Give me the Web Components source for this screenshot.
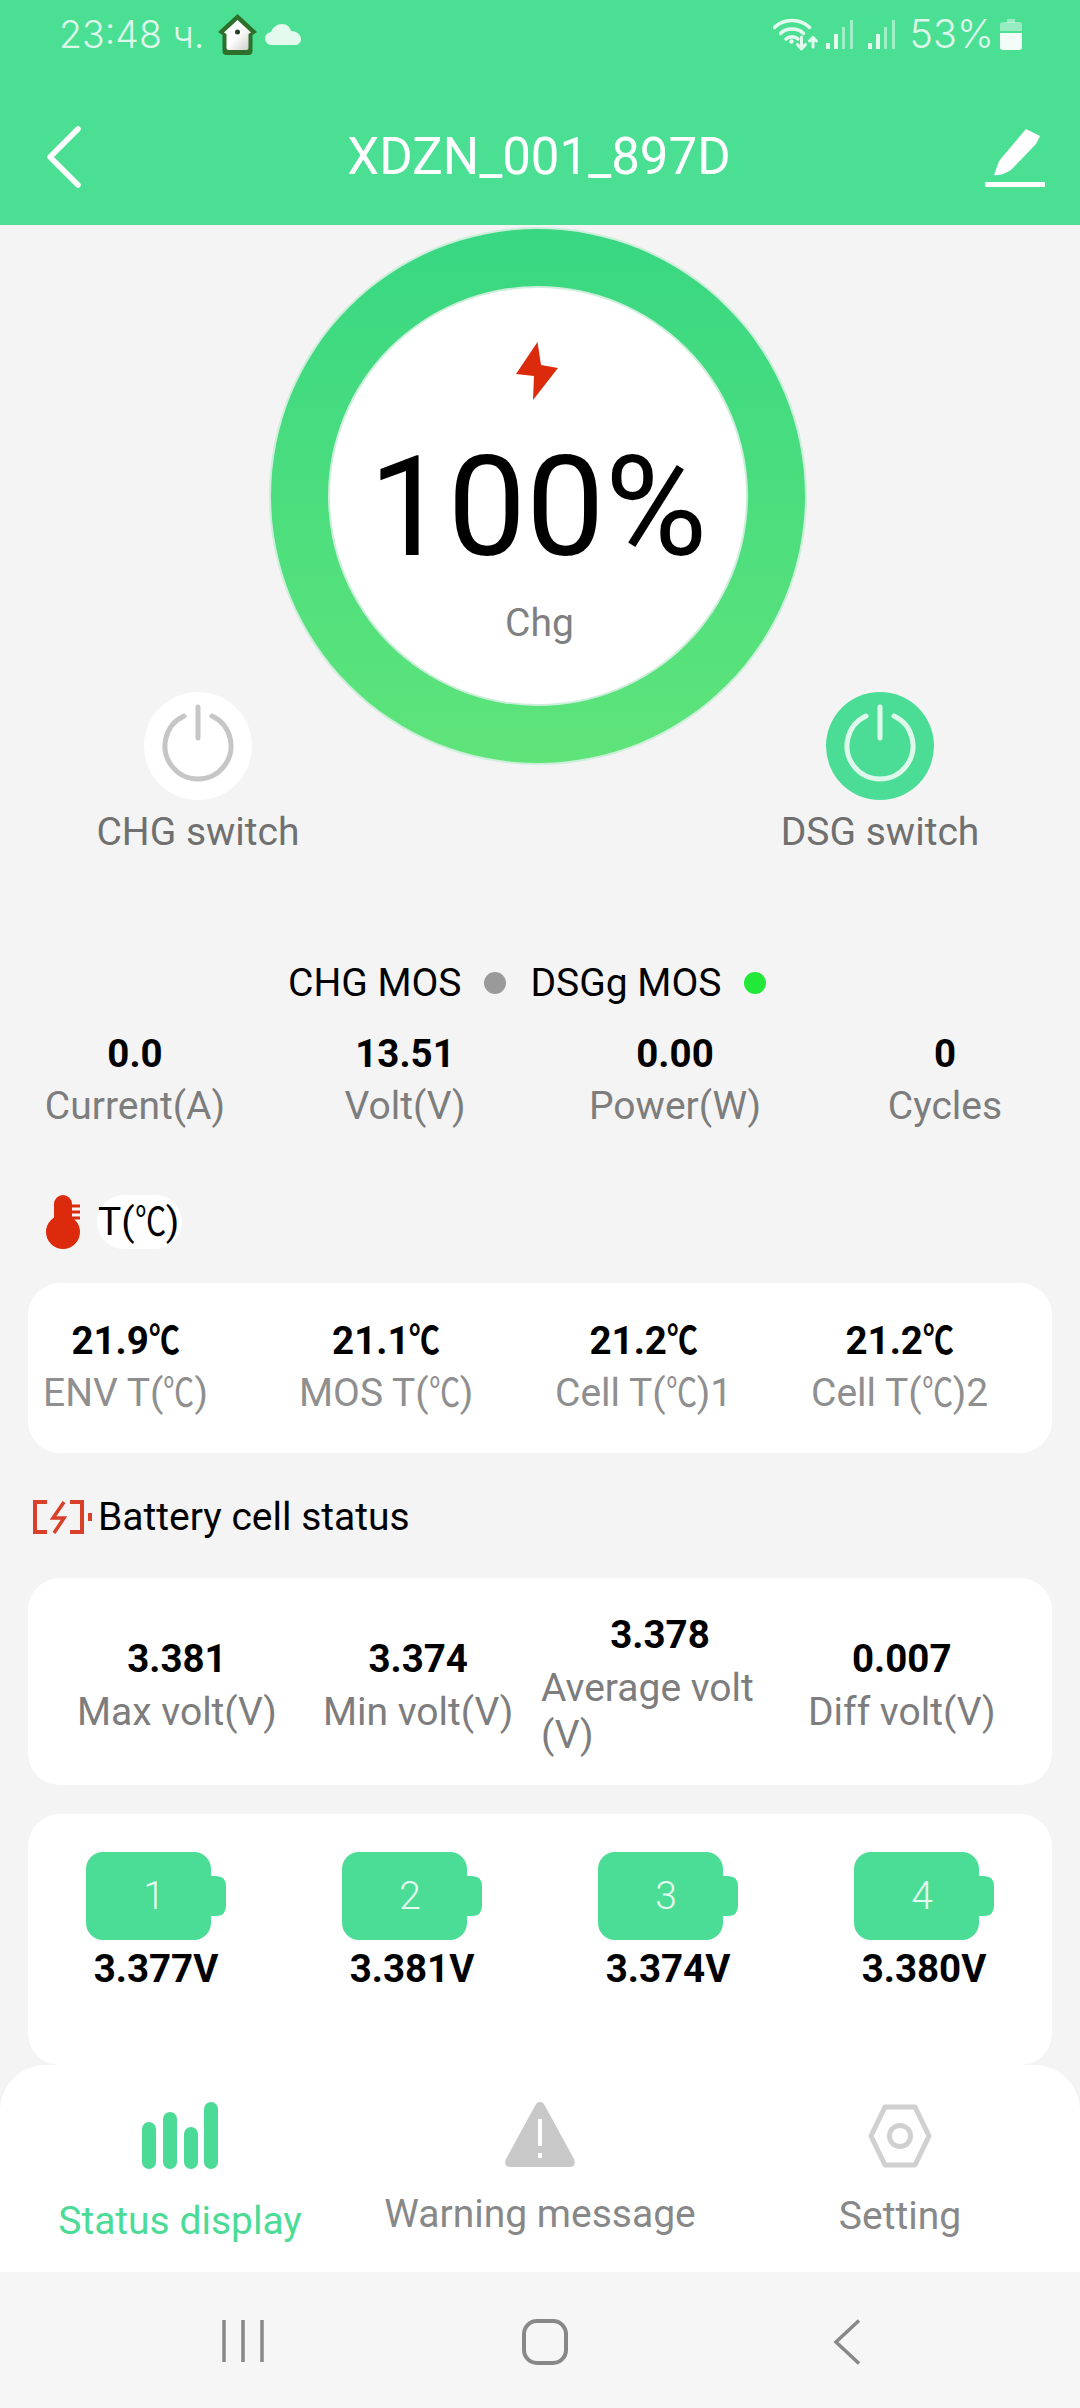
<!DOCTYPE html>
<html>
<head>
<meta charset="utf-8">
<style>
  html, body { margin: 0; padding: 0; }
  body {
    width: 1080px;
    height: 2408px;
    overflow: hidden;
    background: #f4f4f4;
    font-family: Roboto, "Noto Sans CJK SC", sans-serif;
    font-size: 39px;
    color: #000;
  }
  .cel { display: inline-block; transform: scaleX(.8); transform-origin: 0 50%; margin-right: -.2em; }
  charge-gauge { margin: 4px 0 0 271px; }
  .switches {
    display: flex;
    justify-content: space-between;
    margin-top: -71px;
    padding: 0 80px 0 78px;
  }
  .mos {
    display: flex;
    align-items: center;
    height: 46px;
    margin-top: 105px;
    padding-left: 288px;
  }
  .stats { display: grid; grid-template-columns: repeat(4, 270px); margin-top: 21px; justify-items: center; }
  .t-title { margin-top: 62px; padding-left: 46px; }
  .b-title { margin-top: 37px; padding-left: 33px; }
  .t-card { margin-top: 34px; height: 170px; }
  .v-card { margin-top: 34px; height: 207px; --v-lh: 61px; --l-lh: 47px; }
  .c-card { margin-top: 29px; height: 251px; }
</style>
</head>
<body>
<template id="status-bar-tpl">
  <style>
    :host { display: flex; align-items: center; height: 68px; padding: 0 58px 0 59px; color: #dcf8ea; font-family: Inter, Roboto, sans-serif; font-size: 37.5px; font-weight: 300; }
    .left, .right { display: flex; align-items: center; }
    .right { margin-left: auto; }
    svg { display: block; flex: none; }
  </style>
  <div class="left">
    <span>23:48 ч.</span>
    <svg style="margin:0 8px 0 14px" width="39" height="41" viewBox="0 0 39 41">
      <defs><linearGradient id="hm" x1="0" y1="0" x2="1" y2="1"><stop offset="0.5" stop-color="#fff"/><stop offset="1" stop-color="#c9c9c2"/></linearGradient></defs>
      <path d="M19.5 0 39 18 34.5 21V37q0 4-4 4H8.5q-4 0-4-4V21L0 18Z" fill="#2f6f2c"/>
      <path d="M19.5 6 33 18.5 30.5 20V34q0 2-2 2H10.500q-2 0-2-2V20L6 18.500Z" fill="url(#hm)"/>
      <circle cx="19.500" cy="18" r="2.500" fill="#2a3d28"/>
    </svg>
    <svg width="36" height="21" viewBox="0 0 36 21"><path d="M7 21a6.500 6.500 0 0 1-1-13C8 3 12 0 17 0c5 0 8 3 9 7 6 0 10 4 10 8 0 4-3 6-6 6Z" fill="#e4faef"/></svg>
  </div>
  <div class="right">
    <svg width="47" height="36" viewBox="0 0 47 36" fill="none" stroke="#e4faef" stroke-width="3.500" stroke-linecap="round" stroke-linejoin="round">
      <path d="M1.500 11.500C10 2 28 2 36.500 11.500"/>
      <path d="M7.500 17.500C13 11.500 25 11.500 30.500 17.500"/>
      <path d="M13 23c3-3 9-3 12 0" />
      <circle cx="18.500" cy="25.500" r="1.500" fill="#e4faef" stroke-width="1.500"/>
      <path d="M28.500 21V32M24.500 28.500 28.500 33 32.500 28.500" stroke-width="3"/>
      <path d="M40 31V22M36.500 25 40 21.500 43.500 25" stroke-width="3"/>
    </svg>
    <svg style="margin-left:6px" width="28" height="29" viewBox="0 0 28 29">
      <rect x="0" y="23" width="4" height="6" fill="#e4faef"/><rect x="8" y="14" width="4" height="15" fill="#e4faef"/>
      <rect x="16" y="7" width="3" height="22" fill="#e4faef" opacity=".55"/><rect x="24" y="0" width="3" height="29" fill="#e4faef" opacity=".55"/>
    </svg>
    <svg style="margin-left:14px" width="28" height="29" viewBox="0 0 28 29">
      <rect x="0" y="23" width="4" height="6" fill="#e4faef"/><rect x="8" y="14" width="4" height="15" fill="#e4faef"/>
      <rect x="16" y="7" width="3" height="22" fill="#e4faef" opacity=".55"/><rect x="24" y="0" width="3" height="29" fill="#e4faef" opacity=".55"/>
    </svg>
    <span style="margin-left:14px;font-size:39.500px">53%</span>
    <svg style="margin-left:6px" width="22" height="31" viewBox="0 0 22 31">
      <rect x="7" y="0" width="8" height="4" fill="#e4faef" opacity=".5"/>
      <path d="M3 3H19q3 0 3 3V12H0V6q0-3 3-3Z" fill="#e4faef" opacity=".5"/>
      <path d="M0 14H22V28q0 3-3 3H3q-3 0-3-3Z" fill="#f2fdf7"/>
    </svg>
  </div>
</template>

<template id="app-header-tpl">
  <style>
    :host { display: grid; grid-template-columns: 1fr auto 1fr; align-items: center; height: 137px; padding: 20px 49px 0 47px; color: #fff; font-size: 51px; }
    svg { display: block; }
    .edit { justify-self: end; margin-right: -14px; }
  </style>
  <svg width="34" height="62" viewBox="0 0 34 62" fill="none" stroke="#fff" stroke-width="5.500" stroke-linecap="round" stroke-linejoin="round"><path d="M31 3 3 31 31 59"/></svg>
  <span><slot></slot></span>
  <svg class="edit" width="60" height="62" viewBox="0 0 60 62">
    <path d="M9 49 14 35 41 3 55 10 51 18 27 43C22 47 14 50 9 49Z" fill="#fff"/>
    <rect x="0" y="56" width="60" height="5" rx="1" fill="#fff"/>
  </svg>
</template>

<template id="charge-gauge-tpl">
  <style>
    :host { display: block; width: 534px; height: 534px; }
    .ring {
      width: 100%; height: 100%; box-sizing: border-box; padding: 59px 0 0 59px;
      border-radius: 50%;
      background: linear-gradient(#38d782, #5fe47a);
      box-shadow: 0 0 0 2px #cdeedb;
    }
    .face {
      width: 416px; height: 416px; border-radius: 50%; background: #fff;
      box-shadow: 0 0 0 2px #cdeedb;
      display: flex; flex-direction: column; align-items: center;
    }
    svg { display: block; margin: 54px 2px 0 0; flex: none; }
    .pct { margin-top: 32px; font-size: 140px; line-height: 150px; }
    .sub { margin: 18px 0 0 3px; line-height: 46px; color: #808080; }
  </style>
  <div class="ring">
    <div class="face">
      <svg width="42" height="58" viewBox="0 0 42 58"><path d="M21.500 0 0 32 18 34 17 58 42 26 25 23Z" fill="#db2a0c"/></svg>
      <span class="pct">100%</span>
      <span class="sub"><slot></slot></span>
    </div>
  </div>
</template>

<template id="power-switch-tpl">
  <style>
    :host { display: flex; flex-direction: column; align-items: center; width: 240px; color: #707070; }
    .dot { width: 108px; height: 108px; border-radius: 50%; background: #fff; }
    :host([on]) .dot { background: #4bdd96; }
    svg { display: block; stroke: #c6c6c6; }
    :host([on]) svg { stroke: #def8eb; }
    .label { margin-top: 9px; line-height: 46px; }
  </style>
  <div class="dot">
    <svg width="108" height="108" viewBox="0 0 108 108" fill="none" stroke-width="5" stroke-linecap="round">
      <path d="M40 24.100A33 33 0 1 0 68 24.100"/>
      <path d="M54 15V46"/>
    </svg>
  </div>
  <span class="label"><slot></slot></span>
</template>

<template id="mos-light-tpl">
  <style>
    :host { display: inline-flex; align-items: center; line-height: 46px; }
    i { width: 22px; height: 22px; border-radius: 50%; margin: 0 24px 0 23px; background: var(--led, #9a9a9a); }
  </style>
  <span><slot></slot></span><i></i>
</template>

<template id="stat-item-tpl">
  <style>
    :host { display: inline-flex; flex-direction: column; align-items: center; }
    .cel { display: inline-block; transform: scaleX(.8); transform-origin: 0 50%; margin-right: -.2em; }
    .label { color: #7d7d7d; text-align: left; align-self: stretch; line-height: var(--l-lh, 53px); }
    .v { align-self: center; font-weight: 700; font-size: 38.5px; line-height: var(--v-lh, 53px); }
    :host(.light) .label { color: #8f8f8f; }
  </style>
  <span class="v"></span>
  <span class="label"><slot></slot></span>
</template>

<template id="section-title-tpl">
  <style>
    :host { display: flex; align-items: center; height: 54px; }
    .text { display: block; line-height: 54px; padding: 0 3px 0 1px; }
    :host([pill]) .text { background: #fff; border-radius: 27px; }
  </style>
  <slot name="icon"></slot>
  <span class="text"><slot></slot></span>
</template>

<template id="info-card-tpl">
  <style>
    :host { display: block; margin-left: 28px; margin-right: 28px; background: #fff; border-radius: 32px; box-sizing: border-box; }
  </style>
  <slot></slot>
</template>

<template id="cell-battery-tpl">
  <style>
    :host { display: flex; flex-direction: column; align-items: center; width: 256px; padding-top: 38px; }
    .pack { display: grid; width: 140px; height: 88px; }
    .pack > * { grid-area: 1 / 1; }
    svg { display: block; }
    .num { place-self: center; color: #e6fbf1; font-weight: 300; margin-left: -4px; }
    b { margin-top: 2px; line-height: 53px; font-weight: 700; font-size: 38.5px; }
  </style>
  <div class="pack">
    <svg width="140" height="88" viewBox="0 0 140 88">
      <rect x="0" y="0" width="125" height="88" rx="17" fill="#4bdd96"/>
      <path d="M120 24H130q10 0 10 10V54q0 10-10 10H120Z" fill="#4bdd96"/>
    </svg>
    <span class="num"></span>
  </div>
  <b><slot></slot></b>
</template>

<template id="tab-bar-tpl">
  <style>
    :host { display: grid; grid-template-columns: repeat(3, 360px); height: 207px; background: #fff; border-radius: 46px 46px 0 0; }
  </style>
  <slot></slot>
</template>

<template id="tab-item-tpl">
  <style>
    :host { display: flex; flex-direction: column; align-items: center; padding-top: 37px; color: #888; }
    :host([active]) { color: #4bdb96; }
    .icon { height: 68px; }
    .label { line-height: 46px; margin-top: var(--label-gap, 22px); }
    ::slotted(svg) { display: block; }
  </style>
  <div class="icon"><slot name="icon"></slot></div>
  <span class="label"><slot></slot></span>
</template>

<template id="nav-bar-tpl">
  <style>
    :host { display: grid; grid-template-columns: 400px 340px 1fr; height: 136px; background: #f6f6f6; }
    svg { display: block; }
    .a { margin: 47px 0 0 222px; }
    .b { margin: 47px 0 0 122px; }
    .c { margin: 47px 0 0 93px; }
  </style>
  <svg class="a" width="42" height="44" viewBox="0 0 42 44" stroke="#888" stroke-width="3.500"><path d="M2 1V43M21 1V43M40 1V43"/></svg>
  <svg class="b" width="46" height="46" viewBox="0 0 46 46" fill="none" stroke="#888" stroke-width="4"><rect x="2" y="2" width="42" height="42" rx="13"/></svg>
  <svg class="c" width="28" height="46" viewBox="0 0 28 46" fill="none" stroke="#888" stroke-width="3.500"><path d="M26 1.500 3 23 26 44.500"/></svg>
</template>

<app-header-wrap style="display:block;background:#4bdf94;height:225px">
  <status-bar></status-bar>
  <app-header>XDZN_001_897D</app-header>
</app-header-wrap>

<charge-gauge>Chg</charge-gauge>

<div class="switches">
  <power-switch>CHG switch</power-switch>
  <power-switch on>DSG switch</power-switch>
</div>

<div class="mos">
  <mos-light>CHG MOS</mos-light>
  <mos-light style="--led:#22e83a">DSGg MOS</mos-light>
</div>

<div class="stats">
  <stat-item value="0.0">Current(A)</stat-item>
  <stat-item value="13.51">Volt(V)</stat-item>
  <stat-item value="0.00">Power(W)</stat-item>
  <stat-item value="0">Cycles</stat-item>
</div>

<section-title class="t-title" pill>
  <svg slot="icon" style="display:block;margin-right:16px" width="35" height="54" viewBox="0 0 35 54">
    <circle cx="17" cy="37" r="17" fill="#dc2a0c"/>
    <rect x="8" y="0" width="18" height="40" rx="9" fill="#dc2a0c"/>
    <path d="M26 11H34M26 17H34M26 23H34" stroke="#dc2a0c" stroke-width="3"/>
  </svg>
  T(<span class="cel">℃</span>)
</section-title>

<info-card class="t-card">
  <div style="display:grid;grid-template-columns:repeat(4,256px);justify-items:start;padding:31px 0 0 15px">
    <stat-item class="light" value="21.9℃">ENV T(<span class="cel">℃</span>)</stat-item>
    <stat-item class="light" value="21.1℃">MOS T(<span class="cel">℃</span>)</stat-item>
    <stat-item class="light" value="21.2℃">Cell T(<span class="cel">℃</span>)1</stat-item>
    <stat-item class="light" value="21.2℃">Cell T(<span class="cel">℃</span>)2</stat-item>
  </div>
</info-card>

<section-title class="b-title">
  <svg slot="icon" style="display:block;margin-right:4px" width="60" height="36" viewBox="0 0 60 36" fill="none" stroke="#d8402a" stroke-width="4">
    <path d="M14 3H2V33H14"/>
    <path d="M37 3H49V33H37"/>
    <path d="M31 3 20 19H31L21 34" stroke-width="3.500"/>
    <rect x="55" y="14" width="4" height="8" fill="#d8402a" stroke="none"/>
  </svg>
  Battery cell status
</section-title>

<info-card class="v-card">
  <div style="display:grid;height:100%;grid-template-columns:246px 218px 267px 1fr;justify-items:start;align-items:center;padding-left:49px;box-sizing:border-box">
    <stat-item value="3.381">Max volt(V)</stat-item>
    <stat-item value="3.374">Min volt(V)</stat-item>
    <stat-item value="3.378" style="width:238px">Average volt (V)</stat-item>
    <stat-item value="0.007">Diff volt(V)</stat-item>
  </div>
</info-card>

<info-card class="c-card">
  <div style="display:grid;grid-template-columns:repeat(4,256px)">
    <cell-battery n="1">3.377V</cell-battery>
    <cell-battery n="2">3.381V</cell-battery>
    <cell-battery n="3">3.374V</cell-battery>
    <cell-battery n="4">3.380V</cell-battery>
  </div>
</info-card>

<tab-bar>
  <tab-item active style="--label-gap:28px">
    <svg slot="icon" width="78" height="68" viewBox="0 0 78 68" fill="#4bdb96">
      <rect x="1" y="20" width="14" height="47" rx="7"/>
      <rect x="22" y="10" width="14" height="57" rx="7"/>
      <rect x="43" y="25" width="14" height="42" rx="7"/>
      <rect x="63" y="0" width="14" height="67" rx="7"/>
    </svg>
    Status display
  </tab-item>
  <tab-item style="--label-gap:21px">
    <svg slot="icon" width="70" height="66" viewBox="0 0 70 66">
      <path d="M35 0C37 0 38.500 1 39.500 3L69 57Q72 65 64 65H6Q-2 65 1 57L30.500 3C31.500 1 33 0 35 0Z" fill="#c8c8c8"/>
      <rect x="33" y="17" width="4" height="27" fill="#fff"/>
      <rect x="33" y="51" width="4" height="5" fill="#fff"/>
    </svg>
    Warning message
  </tab-item>
  <tab-item style="--label-gap:23px">
    <svg slot="icon" width="64" height="64" viewBox="0 0 64 64" fill="none" stroke="#d0d0d0" stroke-width="5" stroke-linejoin="round" style="margin-top:2px">
      <path d="M17 3H47L61 32 47 61H17L3 32Z"/>
      <circle cx="32" cy="32" r="10.500"/>
    </svg>
    Setting
  </tab-item>
</tab-bar>

<nav-bar></nav-bar>

<script>
  // plain shell: every element just stamps its template
  class Base extends HTMLElement {
    constructor() {
      super();
      this.attachShadow({ mode: 'open' });
      const tpl = document.getElementById(this.localName + '-tpl');
      this.shadowRoot.appendChild(tpl.content.cloneNode(true));
    }
  }

  class StatItem extends Base {
    connectedCallback() {
      const v = this.getAttribute('value');
      const el = this.shadowRoot.querySelector('.v');
      // the degree sign glyph runs wider than the app's, squeeze it
      el.innerHTML = v.replace('℃', '<span class="cel">℃</span>');
    }
  }

  class CellBattery extends Base {
    connectedCallback() {
      this.shadowRoot.querySelector('.num').textContent = this.getAttribute('n');
    }
  }

  class AppHeaderWrap extends HTMLElement {
    constructor() {
      super();
      this.attachShadow({ mode: 'open' }).innerHTML = '<style>:host{display:block}</style><slot></slot>';
    }
  }

  customElements.define('app-header-wrap', AppHeaderWrap);
  customElements.define('stat-item', StatItem);
  customElements.define('cell-battery', CellBattery);
  ['status-bar', 'app-header', 'charge-gauge', 'power-switch', 'mos-light', 'section-title',
   'info-card', 'tab-bar', 'tab-item', 'nav-bar'].forEach(name => {
    customElements.define(name, class extends Base {});
  });
</script>
</body>
</html>
